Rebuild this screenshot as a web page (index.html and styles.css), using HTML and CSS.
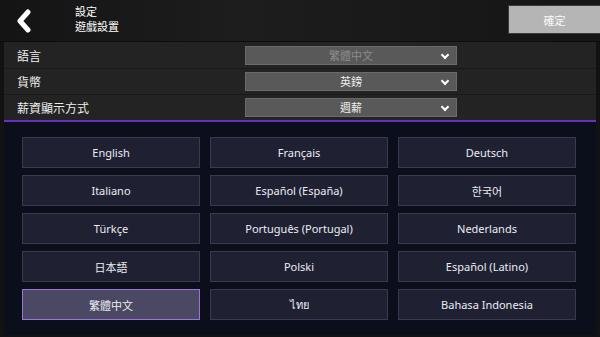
FILE: index.html
```html
<!DOCTYPE html>
<html lang="zh-Hant">
<head>
  <meta charset="UTF-8">
  <title>設定</title>
  <link rel="stylesheet" href="styles.css">
</head>
<body>

  <!-- Kopfzeile -->
  <div class="topbar">
    <div class="back">
      <svg width="18" height="24" viewBox="0 0 18 24">
        <path d="M13 3 L5 12 L13 21" fill="none" stroke="#fff" stroke-width="5" stroke-linecap="round" stroke-linejoin="round"/>
      </svg>
    </div>
    <div class="title">
      <div>設定</div>
      <div>遊戲設置</div>
    </div>
    <button class="confirm">確定</button>
  </div>

  <!-- Einstellungen -->
  <div class="settings">
    <div class="row">
      <span class="label">語言</span>
      <div class="select dim">繁體中文<span class="chev"></span></div>
    </div>
    <div class="row">
      <span class="label">貨幣</span>
      <div class="select">英鎊<span class="chev"></span></div>
    </div>
    <div class="row">
      <span class="label">薪資顯示方式</span>
      <div class="select">週薪<span class="chev"></span></div>
    </div>
  </div>

  <!-- Sprachauswahl -->
  <div class="languages">
    <div class="lang">English</div>
    <div class="lang">Français</div>
    <div class="lang">Deutsch</div>
    <div class="lang">Italiano</div>
    <div class="lang">Español (España)</div>
    <div class="lang">한국어</div>
    <div class="lang">Türkçe</div>
    <div class="lang">Português (Portugal)</div>
    <div class="lang">Nederlands</div>
    <div class="lang">日本語</div>
    <div class="lang">Polski</div>
    <div class="lang">Español (Latino)</div>
    <div class="lang active">繁體中文</div>
    <div class="lang">ไทย</div>
    <div class="lang">Bahasa Indonesia</div>
  </div>

</body>
</html>
```

FILE: styles.css
```css
body {
  margin: 0;
  width: 600px;
  height: 337px;
  overflow: hidden;
  background-color: #121212;
  color: #fff;
  font-family: "Noto Sans", "Noto Sans CJK TC", sans-serif;
  font-size: 11px;
}

.topbar {
  height: 42px;
  display: flex;
  align-items: flex-start;
  background: linear-gradient(90deg, #141414, #1d1d1d 40%, #151515);
  border-bottom: 1px solid #0c0c0c;
  box-sizing: border-box;
}

.back {
  width: 18px;
  height: 24px;
  margin: 9px 0 0 15px;
}

.title {
  margin: 4px 0 0 42px;
  line-height: 15px;
  font-family: "Noto Sans CJK TC", sans-serif;
  font-size: 11px;
}

.confirm {
  margin: 5px 0 0 auto;
  width: 92px;
  height: 29px;
  background-color: #b5b5b5;
  border: 1px solid #3a3a3a;
  border-right: none;
  color: #fafafa;
  font-family: "Noto Sans CJK TC", sans-serif;
  font-size: 11px;
  padding: 0;
}

.settings {
  margin: 0 4px;
  background-color: #232323;
  border-bottom: 2px solid #6a2fc0;
}

.row {
  height: 26px;
  display: flex;
  align-items: center;
  border-top: 1px solid #191919;
  box-sizing: border-box;
}

.row:first-child {
  border-top: none;
}

.label {
  width: 228px;
  padding-left: 13px;
  font-family: "Noto Sans CJK TC", sans-serif;
  font-size: 12px;
  color: #eee;
}

.select {
  position: relative;
  width: 212px;
  height: 19px;
  box-sizing: border-box;
  background-color: #595959;
  border: 1px solid #6a6a6a;
  text-align: center;
  line-height: 17px;
  font-family: "Noto Sans CJK TC", sans-serif;
  font-size: 11px;
  color: #f0f0f0;
}

.select.dim {
  color: #8c8c8c;
}

.chev {
  position: absolute;
  right: 8px;
  top: 5px;
  width: 4px;
  height: 4px;
  border-right: 2px solid #fff;
  border-bottom: 2px solid #fff;
  transform: rotate(45deg);
}

.languages {
  margin: 0 4px;
  height: 213px;
  padding: 15px 0 0 18px;
  box-sizing: border-box;
  background-color: #0b0e1b;
  display: grid;
  grid-template-columns: repeat(3, 178px);
  grid-auto-rows: 31px;
  column-gap: 10px;
  row-gap: 7px;
}

.lang {
  display: flex;
  align-items: center;
  justify-content: center;
  background-color: #1f2133;
  border: 1px solid #393b4d;
  color: #ececf2;
  font-family: "Noto Sans", "Noto Sans CJK TC", "Noto Sans CJK KR", "DejaVu Sans", sans-serif;
  font-size: 11px;
}

.lang.active {
  background-color: #4a4862;
  border-color: #9a74d8;
}
```
